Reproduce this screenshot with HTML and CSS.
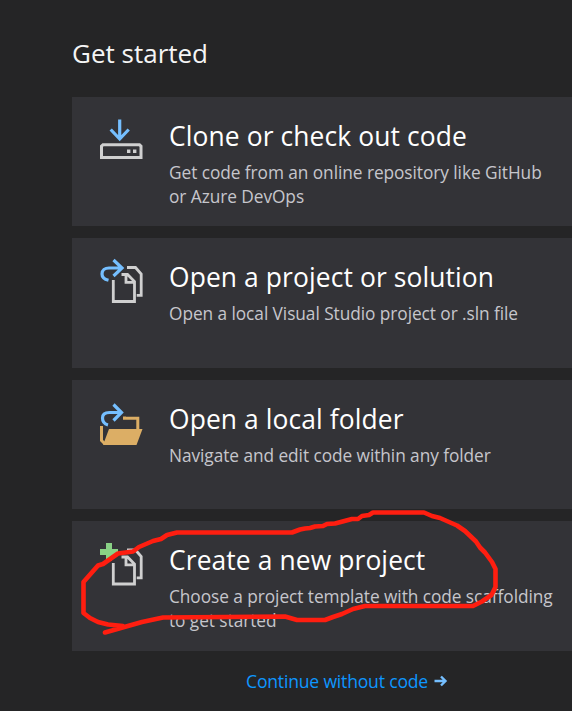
FILE: index.html
```html
<!DOCTYPE html>
<html lang="en">
<head>
<meta charset="utf-8">
<title>Get started</title>
<link rel="stylesheet" href="styles.css">
</head>
<body>
<main class="start">
  <h1 class="heading">Get started</h1>
  <div class="cards">
    <section class="card">
      <svg class="icon" viewBox="0 0 64 56" fill="none">
        <path d="M29.7 8.5V28M20.7 18.5l9 9.500 9-9.500" stroke="#75bfff" stroke-width="3.200"/>
        <path d="M11.500 46.500V35.200l1.500-1.400h36.500l1.500 1.400v11.300z" stroke="#d0d0d0" stroke-width="3"/>
        <path d="M37 38.500h3.400v3.400H37zM43 38.500h3.400v3.400H43z" fill="#d0d0d0"/>
      </svg>
      <div class="copy">
        <h2 class="title">Clone or check out code</h2>
        <p class="desc">Get code from an online repository like GitHub<br>or Azure DevOps</p>
      </div>
    </section>
    <section class="card">
      <svg class="icon" viewBox="0 0 64 56" fill="none">
        <path d="M18.500 28.300c-4-1-6.500-3-6.500-6.300 0-4 3-6 7-6h12M23.500 8l8.500 8-8.500 8" stroke="#75bfff" stroke-width="3.200"/>
        <g stroke="#d0d0d0" stroke-width="2.800"><path d="M23.300 28v21.500h21.200V29.500l-7-7H31.500M36 22.500v7.800h8.500M37 15.500h8.500l5.700 6.500V43.300h-4.500"/></g>
      </svg>
      <div class="copy">
        <h2 class="title">Open a project or solution</h2>
        <p class="desc">Open a local Visual Studio project or .sln file</p>
      </div>
    </section>
    <section class="card">
      <svg class="icon" viewBox="0 0 64 56" fill="none">
        <path d="M18 31c-3.500-1-5.500-4-5.500-7 0-4 3-5.500 7-5.500h12M23.500 10.500l8 8-8 8" stroke="#75bfff" stroke-width="3.200"/>
        <path d="M34.500 22.500v1.700h13.300V37M11.500 32V46.500l3 3" stroke="#dcae65" stroke-width="3"/>
        <path d="M19 35h33.500L46.500 51H13z" fill="#dcae65"/>
      </svg>
      <div class="copy">
        <h2 class="title">Open a local folder</h2>
        <p class="desc">Navigate and edit code within any folder</p>
      </div>
    </section>
    <section class="card">
      <svg class="icon" viewBox="0 0 64 56" fill="none">
        <path d="M16 8h6v6h6v6h-6v6h-6v-6h-6v-6h6z" fill="#89d185"/>
        <g stroke="#d0d0d0" stroke-width="2.800"><path d="M23.300 28v21h21.200V29l-7-7H31.500M36 22v7.800h8.500M37 15h8.500l5.700 6.500V42.800h-4.500"/></g>
      </svg>
      <div class="copy">
        <h2 class="title">Create a new project</h2>
        <p class="desc">Choose a project template with code scaffolding<br>to get started</p>
      </div>
    </section>
  </div>
  <a class="continue">Continue without code
    <svg class="arrow" viewBox="0 0 14 12" fill="none" stroke="#75bfff" stroke-width="2.400"><path d="M0.500 6h11M7 1.500L11.500 6 7 10.500"/></svg>
  </a>
</main>
<svg class="marker" viewBox="0 0 572 711" fill="none" stroke="#ff1e10" stroke-width="4.600" stroke-linecap="round" stroke-linejoin="round">
  <path d="M123 626L108 624.500 98 622 90 618 83.500 613V582L98 565.500 103 564 118 553.500 133 551.500 139 547 153 541 161 539 167 535 177 532.500H292L300 529.500 305 528.500 310 528 315 526.500 323 526 327 524 335 523.500 352 519 358 519 362 516 369 515 373 512.500H424L432 516 440 518 457 525.500 465 531 476 541.500 480 547.500 485 552.500 492 562 495.500 569V587L491.500 595 482 601.500 473 606H365L353 609 342 614 333 617 325 620H297L285 616.500 163 617.500 142 622 105 632.500"/>
</svg>
</body>
</html>
```

FILE: styles.css
```css
* { box-sizing: border-box; }
body {
  margin: 0;
  background: #252526;
  font-family: "Open Sans", "Noto Sans", sans-serif;
  overflow: hidden;
}
.start {
  height: 711px;
  padding: 35px 0 0 72px;
  display: flex;
  flex-direction: column;
}
h1, h2, p { margin: 0; font-weight: 400; white-space: nowrap; }
.heading {
  height: 61.500px;
  color: #f5f5f5;
  font-size: 26px;
  line-height: 36px;
}
.cards { display: grid; gap: 12px; grid-auto-rows: 129.600px; }
.card {
  background: #333337;
  display: flex;
  padding: 14px 0 0 18px;
}
.icon { width: 64px; height: 56px; flex: none; margin-right: 15px; }
.title {
  margin-top: 7px;
  color: #fff;
  font-size: 26.400px;
  letter-spacing: 0.110px;
  line-height: 36px;
}
.desc {
  margin-top: 7px;
  color: #c6c6cc;
  font-size: 17.300px;
  letter-spacing: -0.060px;
  line-height: 24px;
}
.continue {
  display: flex;
  align-items: center;
  gap: 6px;
  margin: 18px 0 0 174px;
  color: #0e97ff;
  font-size: 17.600px;
  letter-spacing: -0.200px;
  line-height: 24px;
  white-space: nowrap;
}
.arrow { width: 14px; height: 12px; }
.marker {
  position: absolute;
  left: 0;
  top: 0;
  width: 572px;
  height: 711px;
  pointer-events: none;
}
```
